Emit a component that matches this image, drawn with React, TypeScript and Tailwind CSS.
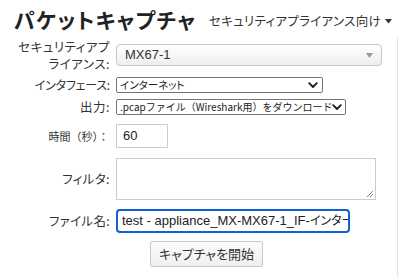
import React from "react";

const jp = "font-['Noto_Sans_CJK_JP','Noto_Sans',sans-serif] [font-feature-settings:'palt']";
const nopalt = "[font-feature-settings:normal]";

function Chevron() {
  return (
    <svg width="10" height="7" viewBox="0 0 10 7" className="shrink-0">
      <path d="M1.2 1.2 L5 5 L8.8 1.2" fill="none" stroke="#222" strokeWidth="1.9" strokeLinecap="round" strokeLinejoin="round" />
    </svg>
  );
}

export default function App() {
  return (
    <div className={`w-[400px] h-[277px] bg-white overflow-hidden text-[#333] ${jp}`}>
      <div className="h-[38px] flex items-start justify-between pl-[14px] pr-[8px]">
        <h1 className="text-[21px] leading-[24px] font-bold text-[#222] mt-[7px] tracking-[1.4px]">パケットキャプチャ</h1>
        <div className="mt-[13px] flex items-center gap-[4px] text-[12.5px] leading-[16px] text-[#333] tracking-[0.3px]">
          <span>セキュリティアプライアンス向け</span>
          <svg width="7" height="5" viewBox="0 0 7 5"><path d="M0 0 L7 0 L3.5 4.5 Z" fill="#333" /></svg>
        </div>
      </div>
      <div className="w-[398px] h-[239px] border-r border-[#e3e3e3] text-[13px]">
        {/* Row 1 */}
        <div className="flex items-center h-[34px]">
          <div className="w-[110px] text-right leading-[17px] text-[12.5px] tracking-[0.5px]">
            セキュリティアプ<br />ライアンス:
          </div>
          <div className="ml-[6px] w-[266px] h-[22px] rounded-[4px] border border-[#c6c6c6] bg-gradient-to-b from-white to-[#eeeeee] flex items-center justify-between pl-[8px] pr-[8px] font-['Liberation_Sans',sans-serif] text-[13px] text-[#333]">
            <span>MX67-1</span>
            <svg width="7" height="5" viewBox="0 0 7 5"><path d="M0 0 L7 0 L3.5 5 Z" fill="#999" /></svg>
          </div>
        </div>
        {/* Row 2 */}
        <div className="flex items-center h-[16px] mt-[5px]">
          <div className="w-[110px] text-right text-[12px] tracking-[-0.2px] leading-[16px]">インタフェース:</div>
          <div className="ml-[6px] w-[207px] h-[16px] rounded-[2px] border border-[#767676] bg-white flex items-center justify-between pl-[3px] pr-[4px] text-[10.5px] text-[#222] leading-[14px]">
            <span>インターネット</span>
            <Chevron />
          </div>
        </div>
        {/* Row 3 */}
        <div className="flex items-center h-[16px] mt-[6px]">
          <div className="w-[110px] text-right text-[12.5px] tracking-[0.5px] leading-[16px]">出力:</div>
          <div className="ml-[6px] w-[230px] h-[16px] rounded-[2px] border border-[#767676] bg-white flex items-center justify-between pl-[3px] pr-[4px] text-[10px] text-[#222] leading-[14px] whitespace-nowrap">
            <span className={nopalt}>.pcapファイル（Wireshark用）をダウンロード</span>
            <Chevron />
          </div>
        </div>
        {/* Row 4 */}
        <div className="flex items-center h-[24px] mt-[9px]">
          <div className={`w-[110px] text-right text-[11px] leading-[16px] pr-[1px] ${nopalt}`}>時間（秒）：</div>
          <div className="ml-[6px] w-[52px] h-[24px] border border-[#cccccc] bg-white flex items-center pl-[6px] font-['Liberation_Sans',sans-serif] text-[13px] text-[#222]">60</div>
        </div>
        {/* Row 5 */}
        <div className="flex items-center h-[42px] mt-[10px]">
          <div className="w-[110px] text-right text-[12.5px] tracking-[0.4px] leading-[16px]">フィルタ:</div>
          <div className="ml-[6px] relative w-[260px] h-[42px] border border-[#cccccc] bg-white">
            <svg width="8" height="8" viewBox="0 0 8 8" className="absolute right-[1px] bottom-[1px]">
              <path d="M7 1 L1 7 M7 4 L4 7" stroke="#888" strokeWidth="1" />
            </svg>
          </div>
        </div>
        {/* Row 6 */}
        <div className="flex items-center h-[24px] mt-[9px]">
          <div className="w-[110px] text-right text-[12.5px] tracking-[0.3px] leading-[16px]">ファイル名:</div>
          <div className="ml-[6px] w-[234px] h-[24px] rounded-[4px] border-2 border-[#0f62d6] bg-white flex items-center pl-[4px] overflow-hidden whitespace-nowrap text-[13px] text-[#222] leading-[16px]">
            <span className="font-['Liberation_Sans','Noto_Sans_CJK_JP',sans-serif]">test - appliance_MX-MX67-1_IF-<span className="text-[12px]">インターネット</span></span>
          </div>
        </div>
        {/* Button */}
        <div className="flex mt-[8px] pl-[150px]">
          <button className="w-[113px] h-[26px] rounded-[2px] border border-[#c8c8c8] bg-gradient-to-b from-[#fbfbfb] to-[#f0f0f0] text-[13px] text-[#333] tracking-[0px] leading-[16px]">
            キャプチャを開始
          </button>
        </div>
      </div>
    </div>
  );
}
